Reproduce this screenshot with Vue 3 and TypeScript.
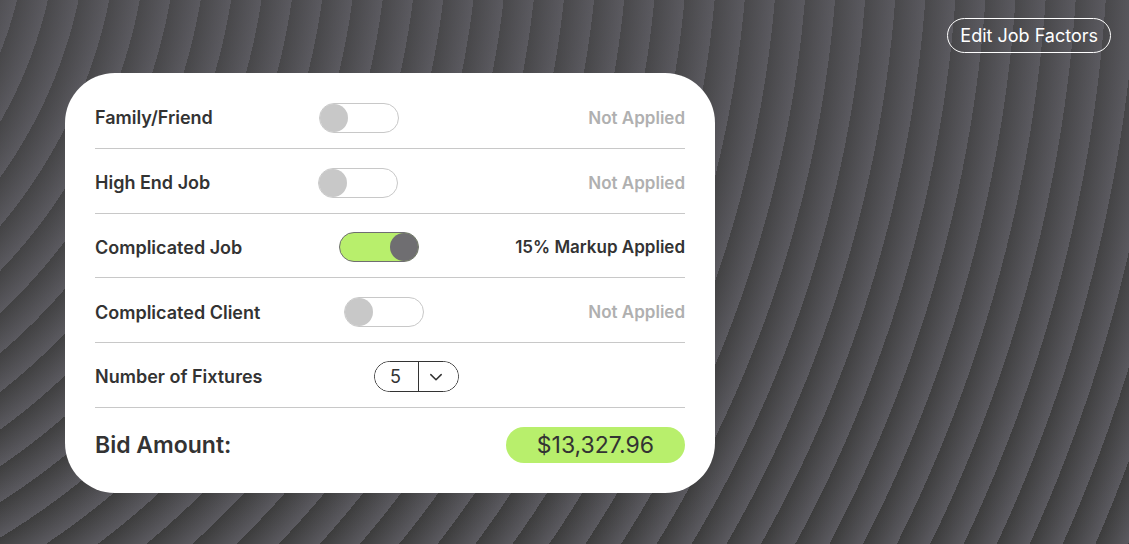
<script setup lang="ts">
import { computed, ref } from 'vue'

interface Factor {
  id: string
  label: string
  markup: number
  applied: boolean
}

const factors = ref<Factor[]>([
  { id: 'family', label: 'Family/Friend', markup: -10, applied: false },
  { id: 'high-end', label: 'High End Job', markup: 20, applied: false },
  { id: 'complicated-job', label: 'Complicated Job', markup: 15, applied: true },
  { id: 'complicated-client', label: 'Complicated Client', markup: 10, applied: false },
])

const fixtureOptions = [1, 2, 3, 4, 5, 6, 7, 8, 9, 10]
const fixtures = ref(5)
const pricePerFixture = 2317.906

const bid = computed(() => {
  const percent = factors.value.reduce((sum, f) => sum + (f.applied ? f.markup : 0), 0)
  return (fixtures.value * pricePerFixture * (1 + percent / 100)).toLocaleString('en-US', {
    style: 'currency',
    currency: 'USD',
  })
})

function status(f: Factor): string {
  if (!f.applied) return 'Not Applied'
  return `${Math.abs(f.markup)}% ${f.markup < 0 ? 'Discount' : 'Markup'} Applied`
}
</script>

<template>
  <div class="page">
    <header class="top">
      <button type="button" class="edit">Edit Job Factors</button>
    </header>
    <main class="card">
      <div class="rows">
        <div v-for="f in factors" :key="f.id" class="row" :class="f.id">
          <label class="label" :for="f.id">{{ f.label }}</label>
          <input :id="f.id" v-model="f.applied" type="checkbox" role="switch" class="toggle" />
          <span class="status" :class="{ on: f.applied }">{{ status(f) }}</span>
        </div>
        <div class="row fixtures">
          <label class="label" for="fixtures">Number of Fixtures</label>
          <div class="picker">
            <select id="fixtures" v-model="fixtures" class="select">
              <option v-for="n in fixtureOptions" :key="n" :value="n">{{ n }}</option>
            </select>
            <span class="arrow">
              <svg width="14" height="8" viewBox="0 0 14 8" aria-hidden="true">
                <path d="M1.8 1.6 L7 6.8 L12.2 1.6" />
              </svg>
            </span>
          </div>
        </div>
      </div>
      <div class="total">
        <span class="total-label">Bid Amount:</span>
        <output class="amount">{{ bid }}</output>
      </div>
    </main>
  </div>
</template>

<style>
body {
  margin: 0;
}
</style>

<style scoped>
.page {
  box-sizing: border-box;
  min-height: 100vh;
  padding: 18px 18px 51px;
  font-family: Inter, 'Liberation Sans', sans-serif;
  font-size: 18px;
  color: #333;
  background:
    linear-gradient(rgba(91, 90, 96, 0.4), rgba(91, 90, 96, 0)),
    repeating-radial-gradient(circle at -385px -99px, #3c3c3c 24px, #5b5a60 54px);
}

.top {
  display: flex;
  justify-content: flex-end;
}

.edit {
  height: 35px;
  padding: 0 12px;
  border: 1px solid #fff;
  border-radius: 18px;
  background: none;
  color: #fff;
  font: inherit;
  cursor: pointer;
}

.card {
  box-sizing: border-box;
  max-width: 650px;
  margin: 20px 0 0 47px;
  padding: 11px 30px 30px;
  border-radius: 50px;
  background: #fff;
}

.rows {
  display: grid;
  grid-template-rows: repeat(5, 1fr);
  height: 324px;
}

.row {
  display: grid;
  grid-template-columns: 224px auto 1fr;
  align-items: center;
  padding-top: 4px;
  border-bottom: 1px solid #c8c8c8;
}

.high-end {
  grid-template-columns: 223px auto 1fr;
}

.complicated-job {
  grid-template-columns: 244px auto 1fr;
}

.complicated-client {
  grid-template-columns: 249px auto 1fr;
}

.fixtures {
  grid-template-columns: 279px auto 1fr;
  padding-top: 3px;
}

.label {
  font-weight: 600;
}

.status {
  text-align: right;
  font-size: 17px;
  font-weight: 600;
  color: #b0b0b0;
}

.status.on {
  color: #333;
}

.toggle {
  appearance: none;
  box-sizing: border-box;
  display: flex;
  width: 80px;
  height: 30px;
  margin: 0;
  border: 1px solid #c8c8c8;
  border-radius: 15px;
  background: #fff;
  cursor: pointer;
}

.toggle::before {
  content: '';
  width: 28px;
  height: 28px;
  border-radius: 50%;
  background: #c8c8c8;
}

.toggle:checked {
  justify-content: flex-end;
  border-color: #6f6e71;
  background: #b8ef6c;
}

.toggle:checked::before {
  background: #6f6e71;
}

.picker {
  position: relative;
  box-sizing: border-box;
  width: 85px;
  height: 31px;
  border: 1px solid #333;
  border-radius: 16px;
  overflow: hidden;
}

.select {
  appearance: none;
  width: 100%;
  height: 100%;
  padding: 0 0 0 15px;
  border: 0;
  background: #fff;
  color: #333;
  font: inherit;
  cursor: pointer;
}

.arrow {
  position: absolute;
  inset: 0 0 0 auto;
  box-sizing: border-box;
  display: flex;
  align-items: center;
  width: 40px;
  padding-left: 10px;
  border-left: 1px solid #333;
  pointer-events: none;
}

.arrow path {
  fill: none;
  stroke: #333;
  stroke-width: 1.5;
  stroke-linecap: round;
  stroke-linejoin: round;
}

.total {
  display: flex;
  justify-content: space-between;
  align-items: center;
  margin-top: 19px;
  font-size: 23px;
  line-height: 36px;
}

.total-label {
  font-weight: 600;
}

.amount {
  padding: 0 31px;
  border-radius: 18px;
  background: #b8ef6c;
}
</style>
